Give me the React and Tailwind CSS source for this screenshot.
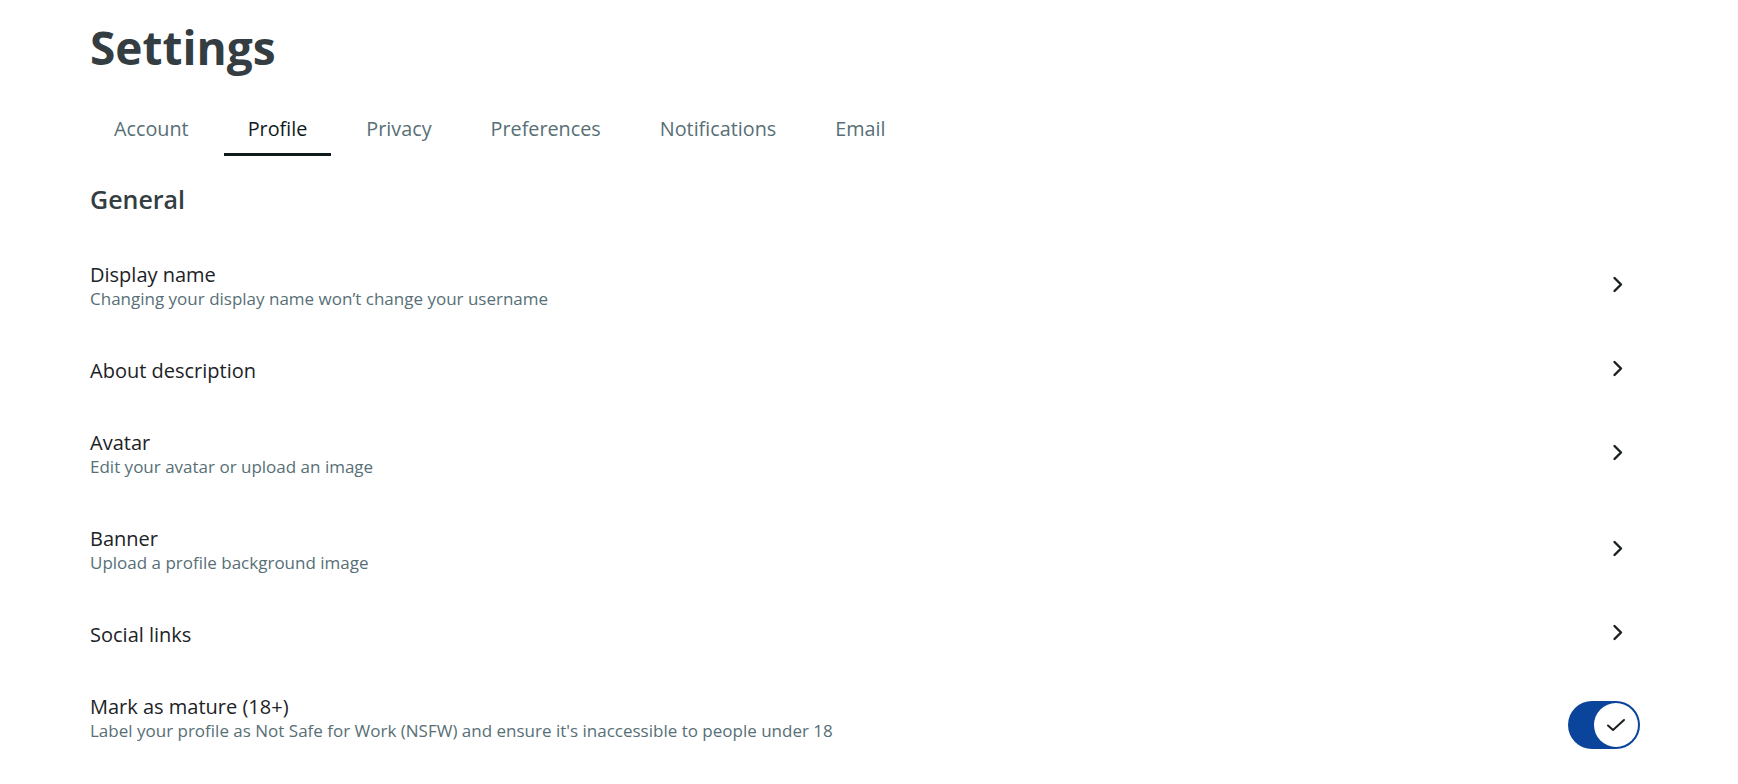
import { useState } from "react";

const tabs = ["Account", "Profile", "Privacy", "Preferences", "Notifications", "Email"];

const rows = [
  { title: "Display name", sub: "Changing your display name won’t change your username" },
  { title: "About description" },
  { title: "Avatar", sub: "Edit your avatar or upload an image" },
  { title: "Banner", sub: "Upload a profile background image" },
  { title: "Social links" },
];

const Chevron = () => (
  <svg width="12" height="17" viewBox="0 0 12 17" fill="none">
    <path d="M2.5 2 9 8.5 2.5 15" stroke="#1a1f21" strokeWidth="2.4" strokeLinecap="round" strokeLinejoin="round" />
  </svg>
);

const Toggle = ({ on, onClick }) => (
  <button
    onClick={onClick}
    className={`mt-[6px] -mb-[6px] flex h-12 w-[72px] items-center rounded-full p-[2px] ${on ? "justify-end bg-[#0a449b]" : "justify-start bg-[#e5ebee]"}`}
  >
    <span className="flex h-11 w-11 items-center justify-center rounded-full bg-white">
      {on && (
        <svg width="20" height="14" viewBox="0 0 20 14" fill="none">
          <path d="M2 7.5 7 12 18 2" stroke="#1a1f21" strokeWidth="2" strokeLinecap="round" strokeLinejoin="round" />
        </svg>
      )}
    </span>
  </button>
);

export default function App() {
  const [active, setActive] = useState("Profile");
  const [mature, setMature] = useState(true);

  return (
    <div className="min-h-screen bg-white" style={{ fontFamily: '"Open Sans", "Noto Sans", sans-serif' }}>
      <div className="pl-[90px] pr-[98px] pt-5">
        <h1 className="text-[46px] font-bold leading-[55px] text-[#333d42]">Settings</h1>

        <nav className="mt-[30px] flex gap-[11px]">
          {tabs.map((t) => (
            <button
              key={t}
              onClick={() => setActive(t)}
              className={`border-b-[3px] px-6 pt-3 pb-3 text-[19.8px] leading-6 ${
                active === t ? "border-[#0f1a1c] text-[#0f1a1c]" : "border-transparent text-[#576f76]"
              }`}
            >
              {t}
            </button>
          ))}
        </nav>

        <h2 className="mt-[27px] text-[25px] font-semibold leading-8 text-[#333d42]">General</h2>

        <div className="mt-[24px]">
          {rows.map((r) => (
            <div key={r.title} className="flex items-center justify-between py-6">
              <div>
                <div className="text-[20px] leading-6 text-[#1c2326]">{r.title}</div>
                {r.sub && <div className="text-[17px] leading-6 text-[#576f76]">{r.sub}</div>}
              </div>
              <div className="mb-[6px] flex w-[44px] justify-center">
                <Chevron />
              </div>
            </div>
          ))}
          <div className="flex items-center justify-between py-6">
            <div>
              <div className="text-[20px] leading-6 text-[#1c2326]">Mark as mature (18+)</div>
              <div className="text-[17px] leading-6 text-[#576f76]">
                Label your profile as Not Safe for Work (NSFW) and ensure it's inaccessible to people under 18
              </div>
            </div>
            <Toggle on={mature} onClick={() => setMature(!mature)} />
          </div>
        </div>
      </div>
    </div>
  );
}
